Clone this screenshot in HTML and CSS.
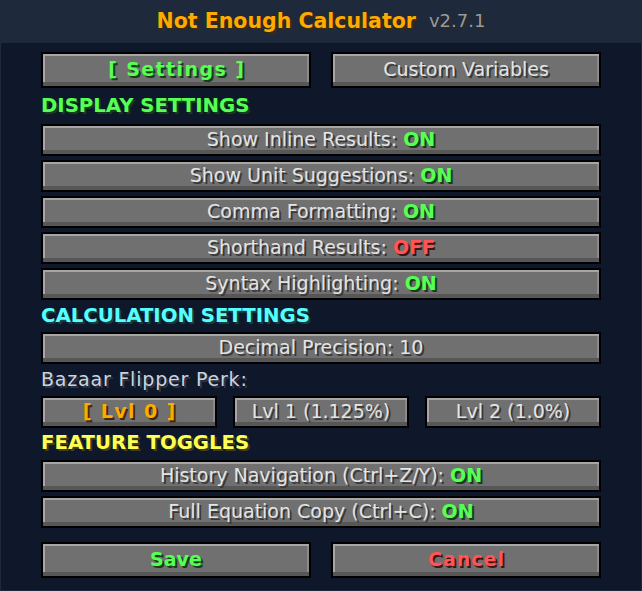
FILE: index.html
```html
<!DOCTYPE html>
<html lang="en">
<head>
<meta charset="utf-8">
<title>Not Enough Calculator</title>
<link rel="stylesheet" href="styles.css">
</head>
<body>
<div class="window">
  <header class="titlebar">
    <span class="title">Not Enough Calculator</span>
    <span class="version">v2.7.1</span>
  </header>
  <main class="content">
    <div class="row-two">
      <div class="btn tall"><span class="bold green spaced">[ Settings ]</span></div>
      <div class="btn tall">Custom Variables</div>
    </div>

    <h2 class="heading heading-first green">DISPLAY SETTINGS</h2>
    <div class="stack">
      <div class="btn">Show Inline Results:&nbsp;<span class="bold green">ON</span></div>
      <div class="btn">Show Unit Suggestions:&nbsp;<span class="bold green">ON</span></div>
      <div class="btn">Comma Formatting:&nbsp;<span class="bold green">ON</span></div>
      <div class="btn">Shorthand Results:&nbsp;<span class="bold red">OFF</span></div>
      <div class="btn">Syntax Highlighting:&nbsp;<span class="bold green">ON</span></div>
    </div>

    <h2 class="heading aqua">CALCULATION SETTINGS</h2>
    <div class="btn">Decimal Precision: 10</div>
    <div class="label">Bazaar Flipper Perk:</div>
    <div class="row-three">
      <div class="btn"><span class="bold gold spaced">[ Lvl 0 ]</span></div>
      <div class="btn">Lvl 1 (1.125%)</div>
      <div class="btn">Lvl 2 (1.0%)</div>
    </div>

    <h2 class="heading heading-last yellow">FEATURE TOGGLES</h2>
    <div class="stack">
      <div class="btn">History Navigation (Ctrl+Z/Y):&nbsp;<span class="bold green">ON</span></div>
      <div class="btn">Full Equation Copy (Ctrl+C):&nbsp;<span class="bold green">ON</span></div>
    </div>

    <div class="row-two actions">
      <div class="btn tall"><span class="bold green">Save</span></div>
      <div class="btn tall"><span class="bold red spaced-sm">Cancel</span></div>
    </div>
  </main>
</div>
</body>
</html>
```

FILE: styles.css
```css
html, body {
  margin: 0;
  padding: 0;
}

body {
  width: 642px;
  height: 591px;
  overflow: hidden;
  background: #0f172a;
  font-family: "DejaVu Sans", "Noto Sans", sans-serif;
}

.window {
  box-sizing: border-box;
  width: 642px;
  height: 591px;
  border: 1px solid #1e293b;
  border-top: 0;
  display: flex;
  flex-direction: column;
}

.titlebar {
  box-sizing: border-box;
  height: 43px;
  margin: 0 -1px;
  padding-bottom: 2px;
  background: #1e293b;
  display: flex;
  align-items: center;
  justify-content: center;
  gap: 13px;
}

.title {
  font-size: 20.5px;
  font-weight: bold;
  color: #ffaa00;
  text-shadow: 2px 2px 0 #3f2a00;
}

.version {
  font-size: 18px;
  color: #9a9a9a;
  text-shadow: 2px 2px 0 #2a2a2a;
}

.content {
  flex: 1;
  padding: 9px 40px 0;
  display: flex;
  flex-direction: column;
}

.row-two {
  display: grid;
  grid-template-columns: 1fr 1fr;
  gap: 20px;
}

.row-three {
  display: grid;
  grid-template-columns: 1fr 1fr 1fr;
  gap: 16px;
}

.stack {
  display: flex;
  flex-direction: column;
  gap: 4px;
}

.btn {
  box-sizing: border-box;
  height: 32px;
  border: 2px solid #000;
  background: #707070;
  box-shadow:
    inset 0 -4px 0 #575757,
    inset 2px 2px 0 #a6a6a6,
    inset -2px 0 0 #8a8a8a;
  display: flex;
  align-items: center;
  justify-content: center;
  padding-bottom: 2px;
  color: #e4e4e4;
  font-size: 19px;
  text-shadow: 2px 2px 0 #383838;
  white-space: nowrap;
}

.btn.tall {
  height: 36px;
}

.heading {
  margin: 0;
  height: 32px;
  line-height: 32px;
  font-size: 19.7px;
  font-weight: bold;
  white-space: nowrap;
}

.heading-first {
  height: 36px;
  line-height: 36px;
}

.heading-last {
  box-sizing: border-box;
  line-height: 29px;
  padding-bottom: 3px;
}

.label {
  height: 32px;
  line-height: 30px;
  font-size: 19px;
  letter-spacing: 0.8px;
  color: #cbd5e1;
  text-shadow: 2px 2px 0 #33363d;
}

.actions {
  margin-top: 14px;
}

.bold {
  font-weight: bold;
}

.spaced {
  letter-spacing: 1.4px;
  padding-left: 1.4px;
}

.spaced-sm {
  letter-spacing: 1px;
  padding-left: 1px;
}

.green {
  color: #55ff55;
  text-shadow: 2px 2px 0 #153f15;
}

.red {
  color: #ff5555;
  text-shadow: 2px 2px 0 #3f1515;
}

.aqua {
  color: #55ffff;
  text-shadow: 2px 2px 0 #153f3f;
}

.yellow {
  color: #ffff55;
  text-shadow: 2px 2px 0 #3f3f15;
}

.gold {
  color: #ffaa00;
  text-shadow: 2px 2px 0 #3f2a00;
}
```
